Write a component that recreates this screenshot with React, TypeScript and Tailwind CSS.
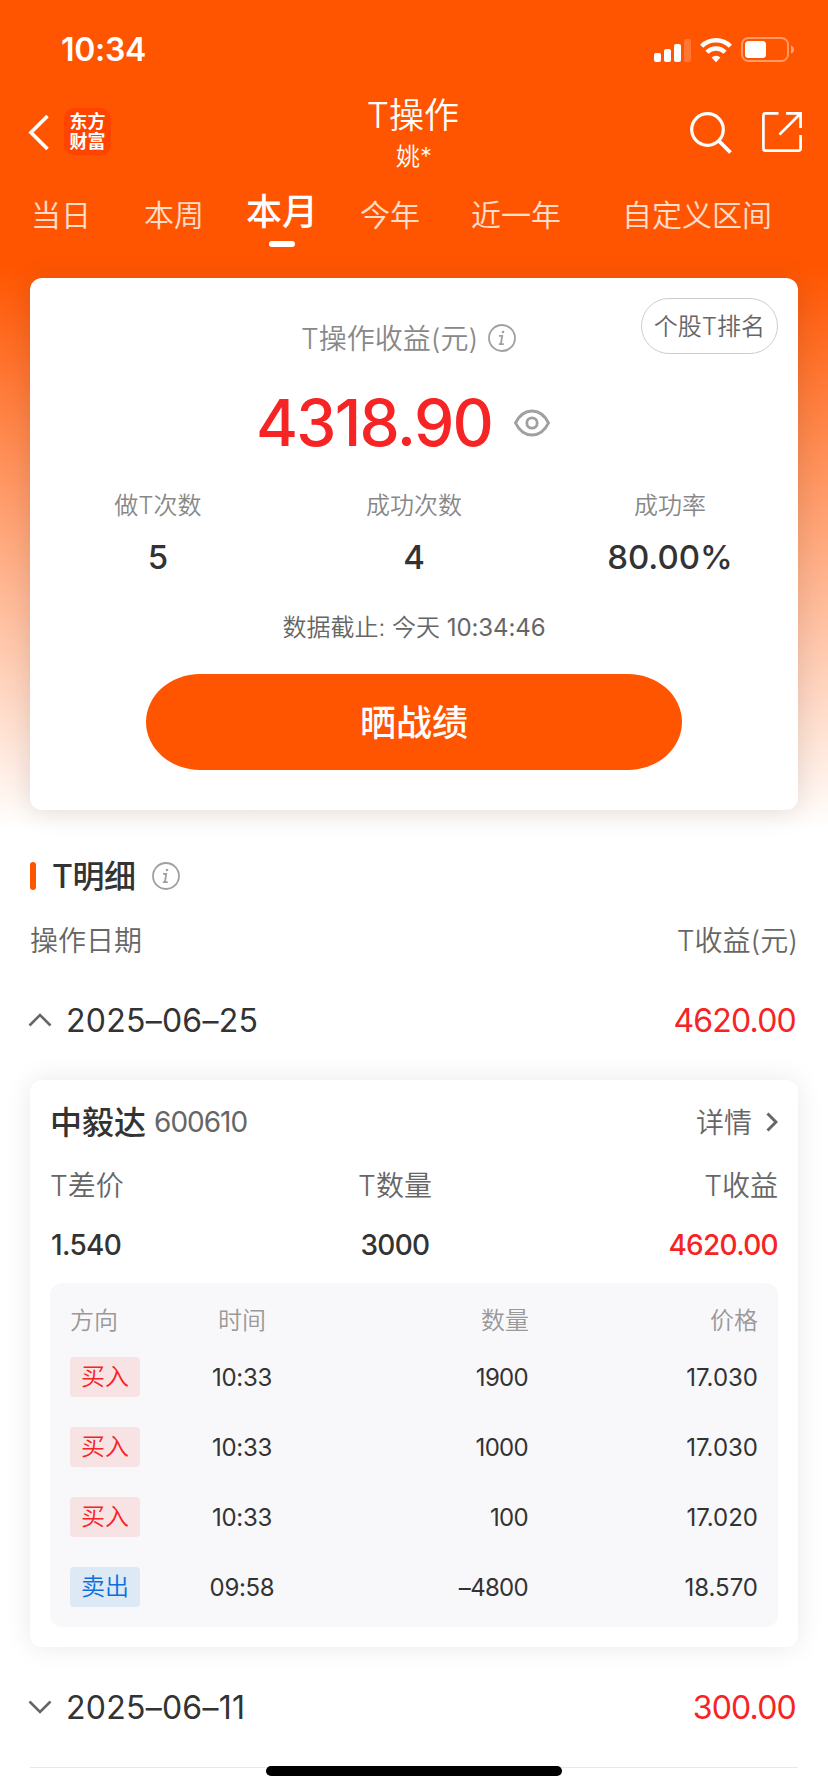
import React from 'react';

interface Trade {
  side: 'buy' | 'sell';
  time: string;
  amount: string;
  price: string;
}

const trades: Trade[] = [
  { side: 'buy', time: '10:33', amount: '1900', price: '17.030' },
  { side: 'buy', time: '10:33', amount: '1000', price: '17.030' },
  { side: 'buy', time: '10:33', amount: '100', price: '17.020' },
  { side: 'sell', time: '09:58', amount: '–4800', price: '18.570' },
];

const stats = [
  { label: '做T次数', value: '5' },
  { label: '成功次数', value: '4' },
  { label: '成功率', value: '80.00%' },
];

const InfoIcon: React.FC = () => (
  <svg className="h-7 w-7 shrink-0" viewBox="0 0 28 28" fill="none" stroke="#a0a0a0">
    <circle cx="14" cy="14" r="13" strokeWidth="1.8" />
    <path d="M11 11.8h3.2l-1.3 8.2M10.8 20.2h5" strokeWidth="1.8" />
    <circle cx="15" cy="8" r="1.3" fill="#a0a0a0" stroke="none" />
  </svg>
);

const StatusBar: React.FC = () => (
  <div className="flex h-[100px] items-center justify-between pl-[61px] pr-[33px]">
    <span className="text-[32px] leading-10 font-semibold tracking-[-0.3px]">10:34</span>
    <div className="flex items-center">
      <svg className="h-[25px] w-[39px]" viewBox="0 0 39 25" fill="#fff">
        <rect x="1" y="15" width="7" height="9" rx="2" />
        <rect x="11" y="11" width="7" height="13" rx="2" />
        <rect x="21" y="6" width="7" height="18" rx="2" />
        <rect x="31" y="1" width="7" height="23" rx="2" opacity="0.2" />
      </svg>
      <svg className="ml-2 h-[25px] w-8" viewBox="0 0 32 25" fill="none" stroke="#fff" strokeWidth="4.4">
        <path d="M1.6 8.2a20.4 20.4 0 0 1 28.8 0" />
        <path d="M7 14.2a12.8 12.8 0 0 1 18 0" />
        <path d="M16 24.2l-4.4-4.6a6.3 6.3 0 0 1 8.8 0z" fill="#fff" stroke="none" />
      </svg>
      <svg className="ml-[9px] h-[26px] w-[54px]" viewBox="0 0 54 26">
        <rect x="1" y="1" width="46" height="23" rx="6.5" fill="none" stroke="#fff" strokeOpacity="0.4" strokeWidth="2" />
        <rect x="4" y="4" width="21" height="17" rx="3.5" fill="#fff" />
        <path d="M50 8.5q3 1 3 4t-3 4z" fill="#fff" fillOpacity="0.45" />
      </svg>
    </div>
  </div>
);

const Header: React.FC = () => (
  <header className="flex h-[85px] px-[26px]">
    <div className="flex w-[160px] items-start pt-2">
      <svg className="mt-[6px] h-9 w-6" viewBox="0 0 24 36" fill="none" stroke="#fff" strokeWidth="3.6">
        <path d="M21.5 2L5 18.5 21.5 35" />
      </svg>
      <div className="ml-[14px] flex h-[47px] w-[47px] flex-col items-center justify-center rounded-[10px] bg-[#ff4400] text-[18px] leading-[19.5px] font-bold">
        <span>东方</span>
        <span>财富</span>
      </div>
    </div>
    <div className="flex flex-1 flex-col items-center">
      <h1 className="-mt-[5px] mr-[2px] text-[35px] leading-[40px] font-[350]">T操作</h1>
      <p className="mt-[10px] text-2xl leading-6 font-[350]">姚*</p>
    </div>
    <div className="flex w-[160px] items-start justify-end pt-3">
      <svg className="h-[42px] w-[42px]" viewBox="0 0 42 42" fill="none" stroke="#fff" strokeWidth="3.2">
        <circle cx="17.5" cy="17.5" r="15.8" />
        <path d="M29 29l11.5 11.5" strokeWidth="3.8" />
      </svg>
      <svg className="ml-[30px] h-10 w-10" viewBox="0 0 40 40" fill="none" stroke="#fff" strokeWidth="2.7">
        <path d="M16.5 1.4H3.4q-2 0-2 2v33.2q0 2 2 2h33.2q2 0 2-2V23" />
        <path d="M24 1.4h14.6V16M38 2L17.5 22.5" />
      </svg>
    </div>
  </header>
);

const Tabs: React.FC = () => (
  <nav className="flex h-[93px] items-start pl-[31px] pt-[10px] text-[30px] leading-10 font-[350] text-white/80">
    <span>当日</span>
    <span className="ml-[53px]">本周</span>
    <span className="-mt-1 ml-[42px] flex flex-col items-center text-[36px] leading-[42px] font-medium text-white">
      本月
      <i className="mt-2 h-[6px] w-[26px] rounded-[3px] bg-white" />
    </span>
    <span className="ml-[42px]">今年</span>
    <span className="ml-[51px]">近一年</span>
    <span className="ml-[61px]">自定义区间</span>
  </nav>
);

const SummaryCard: React.FC = () => (
  <section className="relative mx-[30px] flex h-[532px] flex-col items-center rounded-xl bg-white text-[#888] shadow-[0_2px_28px_rgba(0,0,0,0.12)]">
    <button className="absolute top-5 right-5 h-14 w-[137px] rounded-full border border-[#ccc] pt-[2px] text-2xl font-[350] text-[#666]">
      个股T排名
    </button>
    <div className="mt-10 flex h-10 w-full items-center pl-[271px] text-[28px] font-[350]">
      <span className="w-[187px] pt-px whitespace-nowrap">T操作收益(元)</span>
      <InfoIcon />
    </div>
    <div className="mt-[29px] flex h-[72px] w-full items-center pl-[226px]">
      <span className="w-[258px] text-[64px] leading-[72px] font-[550] tracking-[-1.7px] text-[#f62424]">4318.90</span>
      <svg className="h-7 w-9" viewBox="0 0 36 28" fill="none" stroke="#a0a0a0" strokeWidth="2.8">
        <path d="M1.5 14C9.5-2 26.5-2 34.5 14 26.5 30 9.5 30 1.5 14z" />
        <circle cx="18" cy="14" r="5.2" />
      </svg>
    </div>
    <div className="mt-[29px] grid w-full grid-cols-3 text-center">
      {stats.map((stat) => (
        <div key={stat.label}>
          <div className="text-2xl leading-9 font-[350]">{stat.label}</div>
          <div className="mt-[15px] text-[33px] leading-9 font-medium text-[#333]">{stat.value}</div>
        </div>
      ))}
    </div>
    <p className="mt-[35px] text-2xl leading-9 font-[350] text-[#666]">
      数据截止: 今天 <span className="font-normal tracking-[-0.1px]">10:34:46</span>
    </p>
    <button className="mt-7 h-24 w-[536px] rounded-[54px/48px] bg-[#ff5500] pt-px text-[36px] font-medium text-white">晒战绩</button>
  </section>
);

interface DateRowProps {
  date: string;
  profit: string;
  open?: boolean;
}

const DateRow: React.FC<DateRowProps> = ({ date, profit, open }) => (
  <div className="flex h-10 items-center pr-8 pl-7 text-[32px]">
    <svg className="h-4 w-6" viewBox="0 0 24 16" fill="none" stroke="#666" strokeWidth="2.6">
      <path d={open ? 'M1.5 13.5L12 3l10.500 10.500' : 'M1.5 2.5L12 13 22.5 2.5'} />
    </svg>
    <span className="ml-[14px] pt-px tracking-[0.25px] text-[#333]">{date}</span>
    <span className="ml-auto pt-px tracking-[-0.8px] text-[#f62424]">{profit}</span>
  </div>
);

const TradeTable: React.FC = () => (
  <div className="mt-[19px] h-[344px] rounded-xl bg-[#f8f8fb] px-5 pt-[18px] text-2xl text-[#333]">
    <div className="flex h-[38px] items-center pt-[2px] font-[350] text-[#999]">
      <span className="w-[122px]">方向</span>
      <span className="w-[100px] text-center">时间</span>
      <span className="w-[237px] text-right">数量</span>
      <span className="flex-1 text-right">价格</span>
    </div>
    {trades.map((trade, index) => (
      <div key={index} className="mt-[18px] mb-[30px] flex h-10 items-center [&+&]:mt-0">
        <span
          className={
            trade.side === 'buy'
              ? 'flex h-10 w-[70px] items-center justify-center rounded bg-[#f8e3e4] font-[350] text-[#f62424]'
              : 'flex h-10 w-[70px] items-center justify-center rounded bg-[#dee9f6] font-[350] text-[#0b6fe0]'
          }
        >
          {trade.side === 'buy' ? '买入' : '卖出'}
        </span>
        <span className="ml-[52px] w-[100px] pt-[2px] text-center tracking-[-0.3px]">{trade.time}</span>
        <span className="w-[236px] pt-[2px] text-right tracking-[-0.7px]">{trade.amount}</span>
        <span className="flex-1 pt-[2px] text-right">{trade.price}</span>
      </div>
    ))}
  </div>
);

const StockCard: React.FC = () => (
  <section className="mx-[30px] mt-10 h-[567px] rounded-xl bg-white px-5 pt-[22px] text-[28px] text-[#666] shadow-[0_0_28px_rgba(0,0,0,0.09)]">
    <div className="flex h-10 items-center">
      <span className="pt-px text-[32px] font-medium text-[#333]">中毅达</span>
      <span className="ml-[8px] font-normal tracking-[-1px]">600610</span>
      <span className="ml-auto pt-px font-[350]">详情</span>
      <svg className="ml-[14px] h-5 w-3" viewBox="0 0 12 20" fill="none" stroke="#666" strokeWidth="3">
        <path d="M1.5 1.5L10 10l-8.5 8.5" />
      </svg>
    </div>
    <div className="mt-[23px] grid h-10 grid-cols-[240px_210px_1fr] items-center font-[350]">
      <span>T差价</span>
      <span className="text-center">T数量</span>
      <span className="text-right">T收益</span>
    </div>
    <div className="mt-[19px] grid h-10 grid-cols-[240px_210px_1fr] items-center font-medium tracking-[-0.7px] text-[#333]">
      <span className="pl-px">1.540</span>
      <span className="text-center">3000</span>
      <span className="text-right text-[#f62424]">4620.00</span>
    </div>
    <TradeTable />
  </section>
);

const App: React.FC = () => {
  return (
    <div className="h-[1792px] w-[828px] overflow-hidden bg-white bg-[linear-gradient(180deg,#ff5500_265px,#ffffff_828px)] font-['Inter','Noto_Sans_CJK_SC',sans-serif]">
      <div className="text-white">
        <StatusBar />
        <Header />
        <Tabs />
      </div>
      <SummaryCard />

      <div className="mt-[46px] flex h-10 items-center pl-[30px]">
        <i className="h-7 w-[6px] rounded-sm bg-[#ff5500]" />
        <h2 className="ml-4 w-[100px] pt-px text-[32px] font-medium tracking-[-0.4px] whitespace-nowrap text-[#333]">T明细</h2>
        <InfoIcon />
      </div>
      <div className="mt-[25px] flex h-10 items-center justify-between px-[30px] text-[28px] font-[350] text-[#666]">
        <span>操作日期</span>
        <span>T收益(元)</span>
      </div>
      <div className="mt-[39px]">
        <DateRow date="2025–06–25" profit="4620.00" open />
      </div>
      <StockCard />
      <div className="mt-10">
        <DateRow date="2025–06–11" profit="300.00" />
      </div>
      <div className="mx-[30px] mt-10 flex justify-center border-t border-[#e8e8e8]">
        <div className="-mt-[2px] h-[10px] w-[296px] rounded-full bg-black" />
      </div>
    </div>
  );
};

export default App;
